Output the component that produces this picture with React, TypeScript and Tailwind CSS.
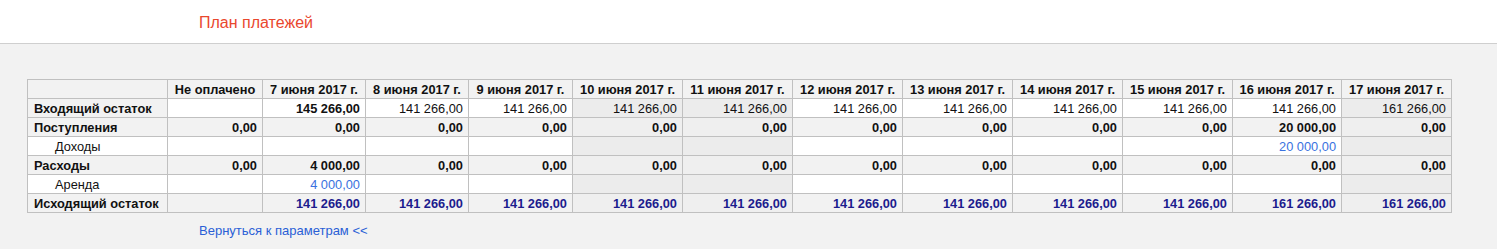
const dates = [
  '7 июня 2017 г.',
  '8 июня 2017 г.',
  '9 июня 2017 г.',
  '10 июня 2017 г.',
  '11 июня 2017 г.',
  '12 июня 2017 г.',
  '13 июня 2017 г.',
  '14 июня 2017 г.',
  '15 июня 2017 г.',
  '16 июня 2017 г.',
  '17 июня 2017 г.',
]

// суббота и воскресенье
const weekend = [3, 4, 10]

const widths = [140, 95, 103, 103, 104, 110, 110, 110, 110, 110, 110, 109, 110]

type Row = {
  label: string
  kind: 'total' | 'group' | 'item' | 'out'
  unpaid: string
  values: string[]
}

const rows: Row[] = [
  {
    label: 'Входящий остаток',
    kind: 'total',
    unpaid: '',
    values: ['145 266,00', '141 266,00', '141 266,00', '141 266,00', '141 266,00', '141 266,00', '141 266,00', '141 266,00', '141 266,00', '141 266,00', '161 266,00'],
  },
  {
    label: 'Поступления',
    kind: 'group',
    unpaid: '0,00',
    values: ['0,00', '0,00', '0,00', '0,00', '0,00', '0,00', '0,00', '0,00', '0,00', '20 000,00', '0,00'],
  },
  {
    label: 'Доходы',
    kind: 'item',
    unpaid: '',
    values: ['', '', '', '', '', '', '', '', '', '20 000,00', ''],
  },
  {
    label: 'Расходы',
    kind: 'group',
    unpaid: '0,00',
    values: ['4 000,00', '0,00', '0,00', '0,00', '0,00', '0,00', '0,00', '0,00', '0,00', '0,00', '0,00'],
  },
  {
    label: 'Аренда',
    kind: 'item',
    unpaid: '',
    values: ['4 000,00', '', '', '', '', '', '', '', '', '', ''],
  },
  {
    label: 'Исходящий остаток',
    kind: 'out',
    unpaid: '',
    values: ['141 266,00', '141 266,00', '141 266,00', '141 266,00', '141 266,00', '141 266,00', '141 266,00', '141 266,00', '141 266,00', '161 266,00', '161 266,00'],
  },
]

function cellBg(kind: Row['kind'], isWeekend: boolean) {
  if (kind === 'group' || kind === 'out') return isWeekend ? 'bg-[#efefef]' : 'bg-[#f2f2f2]'
  return isWeekend ? 'bg-[#ececec]' : 'bg-white'
}

function textStyle(kind: Row['kind']) {
  if (kind === 'total') return 'font-normal text-[#111]'
  if (kind === 'group') return 'font-bold text-[#111]'
  if (kind === 'item') return 'font-normal text-[#3a72e0]'
  return 'font-bold text-[#1c1c8e]'
}

export default function App() {
  return (
    <div className="min-h-[249px] bg-[#f2f2f2] font-['Liberation_Sans',Arial,sans-serif]">
      <div className="h-[44px] bg-white border-b border-[#cfcfcf] pl-[199px] pt-[11px]">
        <span className="text-[16px] leading-[20px] text-[#e9472e]">План платежей</span>
      </div>

      <div className="pt-[35px] pl-[27px]">
        <table className="table-fixed border-collapse text-[12.8px] leading-[15px]">
          <colgroup>
            {widths.map((w, i) => (
              <col key={i} style={{ width: w }} />
            ))}
          </colgroup>
          <thead>
            <tr className="h-[19px]">
              <th className="border border-[#c0c0c0] bg-[#f2f2f2] p-0"></th>
              <th className="border border-[#c0c0c0] bg-[#f2f2f2] px-[5px] py-0 text-center font-bold text-[#111] whitespace-nowrap">
                Не оплачено
              </th>
              {dates.map((d) => (
                <th key={d} className="border border-[#c0c0c0] bg-[#f2f2f2] px-[4px] py-0 text-center font-bold text-[#111] whitespace-nowrap">
                  {d}
                </th>
              ))}
            </tr>
          </thead>
          <tbody>
            {rows.map((r) => (
              <tr key={r.label} className="h-[19px]">
                <td
                  className={
                    'border border-[#c0c0c0] py-0 whitespace-nowrap text-[#111] ' +
                    (r.kind === 'item' ? 'bg-white pl-[27px] font-normal' : 'bg-[#f2f2f2] pl-[6px] font-bold')
                  }
                >
                  {r.label}
                </td>
                <td className={'border border-[#c0c0c0] px-[5px] py-0 text-right whitespace-nowrap font-bold text-[#111] ' + cellBg(r.kind, false)}>
                  {r.unpaid}
                </td>
                {r.values.map((v, i) => (
                  <td
                    key={i}
                    className={
                      'border border-[#c0c0c0] px-[5px] py-0 text-right whitespace-nowrap ' +
                      cellBg(r.kind, weekend.includes(i)) +
                      ' ' +
                      (r.kind === 'total' && i === 0 ? 'font-bold text-[#111]' : textStyle(r.kind))
                    }
                  >
                    {v}
                  </td>
                ))}
              </tr>
            ))}
          </tbody>
        </table>
      </div>

      <div className="pl-[199px] pt-[5px]">
        <a href="#" className="text-[13px] leading-[16px] text-[#2a5fd6]">
          Вернуться к параметрам &lt;&lt;
        </a>
      </div>
    </div>
  )
}
